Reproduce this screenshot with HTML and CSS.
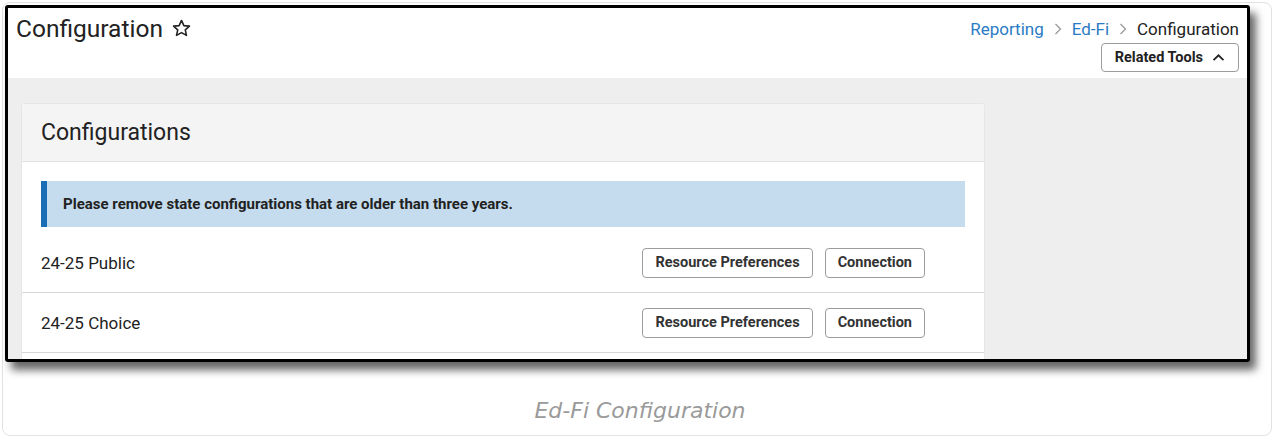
FILE: index.html
```html
<!DOCTYPE html>
<html lang="en">
<head>
<meta charset="utf-8">
<title>Ed-Fi Configuration</title>
<link rel="stylesheet" href="styles.css">
</head>
<body>
<figure class="figure">
  <div class="shot">
    <header class="page-header">
      <div class="title-wrap">
        <h1 class="page-title">Configuration</h1>
        <svg class="star" viewBox="0 0 24 24" width="21" height="21" aria-hidden="true">
          <path d="M12 2.8l2.7 5.9 6.4.6-4.8 4.3 1.4 6.3L12 16.7l-5.7 3.2 1.4-6.3-4.8-4.3 6.4-.6z" fill="none" stroke="#222" stroke-width="1.8" stroke-linejoin="round"/>
        </svg>
      </div>
      <div class="header-right">
        <nav class="crumbs">
          <a class="crumb-link">Reporting</a>
          <svg class="crumb-sep" viewBox="0 0 8 12" width="8" height="12" aria-hidden="true"><path d="M1.5 1l5 5-5 5" fill="none" stroke="#9a9a9a" stroke-width="1.3"/></svg>
          <a class="crumb-link">Ed-Fi</a>
          <svg class="crumb-sep" viewBox="0 0 8 12" width="8" height="12" aria-hidden="true"><path d="M1.5 1l5 5-5 5" fill="none" stroke="#9a9a9a" stroke-width="1.3"/></svg>
          <span class="crumb-current">Configuration</span>
        </nav>
        <button class="btn related">Related Tools
          <svg class="chev" viewBox="0 0 14 10" width="13" height="9" aria-hidden="true"><path d="M1.5 8l5.5-5.5 5.5 5.5" fill="none" stroke="#222" stroke-width="2"/></svg>
        </button>
      </div>
    </header>
    <main class="workspace">
      <section class="card">
        <div class="card-head">Configurations</div>
        <div class="card-body">
          <div class="alert">Please remove state configurations that are older than three years.</div>
          <div class="row">
            <span class="row-name">24-25 Public</span>
            <div class="row-actions">
              <button class="btn">Resource Preferences</button>
              <button class="btn">Connection</button>
            </div>
          </div>
          <div class="row">
            <span class="row-name">24-25 Choice</span>
            <div class="row-actions">
              <button class="btn">Resource Preferences</button>
              <button class="btn">Connection</button>
            </div>
          </div>
        </div>
      </section>
    </main>
  </div>
  <figcaption class="caption">Ed-Fi Configuration</figcaption>
</figure>
</body>
</html>
```

FILE: styles.css
```css
* { box-sizing: border-box; }

html, body {
  margin: 0;
  padding: 0;
  background: #fff;
}

body {
  width: 1274px;
  height: 437px;
  overflow: hidden;
  font-family: Roboto, "Liberation Sans", Arial, sans-serif;
  color: #222;
}

.figure {
  margin: 2px 2px 0 2px;
  height: 434px;
  border: 1px solid #e2e2e2;
  border-radius: 8px;
  padding: 2px 0 0 2px;
  display: flex;
  flex-direction: column;
}

/* framed screenshot of the tool */
.shot {
  width: 1245px;
  height: 357px;
  flex: none;
  border: 3px solid #000;
  border-radius: 3px;
  box-shadow: 6px 8px 9px rgba(0, 0, 0, 0.6);
  overflow: hidden;
  display: flex;
  flex-direction: column;
  background: #eee;
}

.page-header {
  height: 70px;
  flex: none;
  background: #fff;
  display: flex;
  justify-content: space-between;
  padding: 6px 8px 0 8px;
}

.title-wrap {
  display: flex;
  align-items: flex-start;
  gap: 8px;
}

.page-title {
  margin: 0;
  font-size: 24.5px;
  font-weight: 400;
  line-height: 29px;
  color: #222;
}

.star {
  margin-top: 4px;
}

.header-right {
  display: flex;
  flex-direction: column;
  align-items: flex-end;
  gap: 4px;
}

.crumbs {
  display: flex;
  align-items: center;
  gap: 10px;
  font-size: 17px;
  line-height: 20px;
  padding-top: 5px;
}

.crumb-link {
  color: #2a7bc4;
}

.crumb-current {
  color: #222;
}

.crumb-sep {
  display: block;
}

.btn {
  height: 30px;
  padding: 0 12px;
  border: 1px solid #9c9c9c;
  border-radius: 4px;
  background: #fff;
  font-family: Roboto, "Liberation Sans", Arial, sans-serif;
  font-size: 14.5px;
  font-weight: 700;
  color: #333;
  display: inline-flex;
  align-items: center;
  gap: 9px;
}

.related {
  height: 29px;
  padding: 0 13px;
  color: #222;
}

.chev {
  display: block;
}

.workspace {
  flex: 1;
  padding: 25px 0 0 13px;
}

.card {
  width: 964px;
  background: #fff;
  border: 1px solid #e6e6e6;
  border-radius: 3px;
}

.card-head {
  height: 58px;
  background: #f4f4f4;
  border-bottom: 1px solid #e2e2e2;
  padding-left: 19px;
  display: flex;
  align-items: center;
  font-size: 23px;
  color: #222;
}

.card-body {
  padding: 19px 0 12px 0;
}

.alert {
  margin: 0 19px;
  height: 46px;
  background: #c5dcee;
  border-left: 6px solid #1a6db5;
  padding-left: 16px;
  display: flex;
  align-items: center;
  font-size: 15px;
  font-weight: 700;
  color: #222;
}

.row {
  height: 60px;
  border-bottom: 1px solid #d6d6d6;
  display: flex;
  align-items: center;
  justify-content: space-between;
  padding: 0 59px 0 19px;
  font-size: 17px;
  color: #222;
}

.alert + .row {
  margin-top: 6px;
}

.row-actions {
  display: flex;
  gap: 12px;
}

.caption {
  margin-top: 36px;
  text-align: center;
  font-family: "DejaVu Sans", "Open Sans", sans-serif;
  font-style: italic;
  font-size: 22px;
  line-height: 26px;
  color: #9a9a9a;
  padding-left: 4px;
}
```
